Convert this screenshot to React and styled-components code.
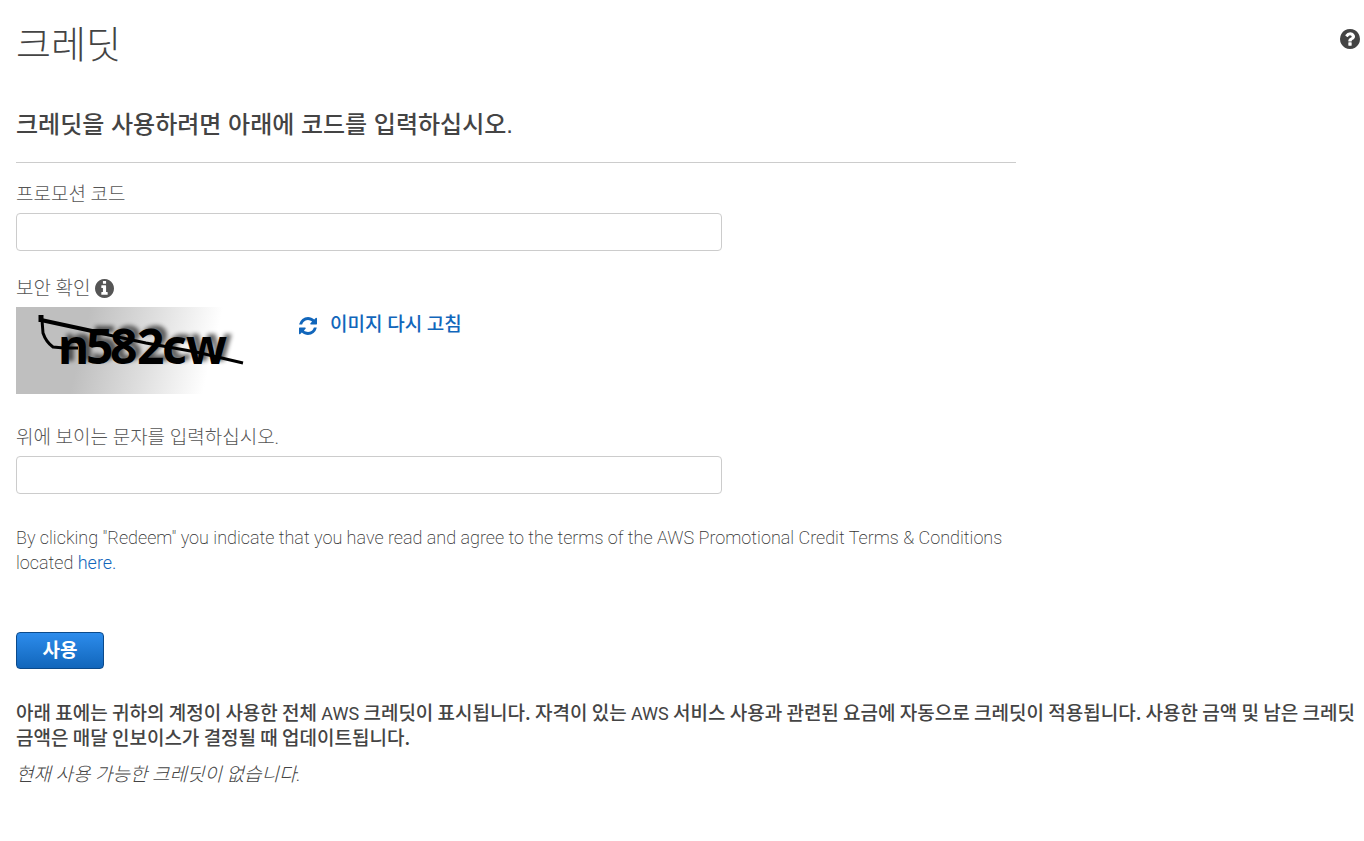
import React from "react";
import styled, { createGlobalStyle } from "styled-components";

const GlobalStyle = createGlobalStyle`
  *, *::before, *::after { box-sizing: border-box; }
  body {
    margin: 0;
    background: #fff;
    color: #444;
    font-family: Roboto, "Noto Sans CJK KR", sans-serif;
    font-size: 19px;
    font-weight: 300;
    line-height: 25px;
  }
`;

const Page = styled.main`
  padding: 16px 4px 16px 16px;
`;

const Header = styled.header`
  display: flex;
  align-items: flex-start;
  justify-content: space-between;
`;

const Title = styled.h1`
  margin: 0;
  font-size: 38px;
  font-weight: 300;
  line-height: 58px;
`;

const HelpButton = styled.button`
  display: flex;
  margin-top: 13px;
  padding: 0;
  border: 0;
  background: none;
  color: #444;
  cursor: pointer;
`;

const Form = styled.form`
  max-width: 1000px;
`;

const SectionTitle = styled.h2`
  margin: 30px 0 19px;
  padding: 4px 0 20px;
  border-bottom: 1px solid #ccc;
  font-family: "Liberation Sans", "Noto Sans CJK KR", sans-serif;
  font-size: 24px;
  font-weight: 500;
  line-height: 34px;
`;

const Field = styled.div`
  display: flex;
  flex-direction: column;
  max-width: 706px;
  gap: 6px;
  margin-bottom: ${(p) => p.$after}px;
`;

const Label = styled.label`
  display: flex;
  align-items: center;
  gap: 4px;
  color: #555;
`;

const TextInput = styled.input`
  width: 100%;
  height: 38px;
  padding: 6px 12px;
  border: 1px solid #ccc;
  border-radius: 4px;
  background: #fff;
  font: inherit;
`;

const CaptchaRow = styled.div`
  display: flex;
  align-items: flex-start;
  gap: 33px;
`;

const CaptchaImage = styled.svg`
  display: block;
  width: 250px;
  height: 87px;
`;

const CaptchaText = styled.text`
  font-family: "Noto Sans", "Open Sans", sans-serif;
  font-size: 48px;
  font-weight: 700;
`;

const RefreshButton = styled.button`
  display: flex;
  align-items: center;
  gap: 13px;
  margin-top: 5px;
  padding: 0;
  border: 0;
  background: none;
  color: #1166bb;
  font: inherit;
  font-weight: 500;
  cursor: pointer;

  svg {
    margin-top: 2px;
  }
`;

const Terms = styled.p`
  margin: 0 0 57px;
  color: #333;
  font-size: 18px;
  font-weight: 200;
`;

const Link = styled.a`
  color: #1166bb;
  font-weight: 300;
  text-decoration: none;
`;

const SubmitButton = styled.button`
  display: block;
  width: 88px;
  height: 37px;
  padding: 0;
  border: 1px solid #0b4a8b;
  border-radius: 4px;
  background: linear-gradient(#2d8cec, #1166bb);
  color: #fff;
  font: inherit;
  font-weight: 700;
  cursor: pointer;
`;

const Note = styled.p`
  margin: 30px 0 13px;
  font-family: "Noto Sans CJK KR", sans-serif;
  font-weight: 500;
`;

const Latin = styled.span`
  font-family: Roboto, sans-serif;
  font-size: 18px;
  font-weight: 400;
  line-height: 1;
`;

const Empty = styled.p`
  margin: 0;
  font-style: italic;
`;

const Icon = ({ size, d, viewBox = "0 128 1536 1536" }) => (
  <svg width={size} height={size} viewBox={viewBox} fill="currentColor" aria-hidden="true">
    <path d={d} />
  </svg>
);

const INFO =
  "M1024 1376v-160q0-14-9-23t-23-9h-96v-512q0-14-9-23t-23-9h-320q-14 0-23 9t-9 23v160q0 14 9 23t23 9h96v320h-96q-14 0-23 9t-9 23v160q0 14 9 23t23 9h448q14 0 23-9t9-23zm-128-896v-160q0-14-9-23t-23-9h-192q-14 0-23 9t-9 23v160q0 14 9 23t23 9h192q14 0 23-9t9-23zm640 416q0 209-103 385.500t-279.500 279.500-385.500 103-385.500-103-279.500-279.500-103-385.500 103-385.500 279.500-279.500 385.500-103 385.500 103 279.500 279.500 103 385.500z";
const QUESTION =
  "M896 1376v-192q0-14-9-23t-23-9h-192q-14 0-23 9t-9 23v192q0 14 9 23t23 9h192q14 0 23-9t9-23zm256-672q0-88-55.500-163t-138.500-116-170-41q-243 0-371 213-15 24 8 42l132 100q7 6 19 6 16 0 25-12 53-68 86-92 34-24 86-24 48 0 85.500 26t37.500 59q0 38-20 61t-68 45q-63 28-115.500 86.500t-52.500 125.500v36q0 14 9 23t23 9h192q14 0 23-9t9-23q0-19 21.500-49.500t54.500-49.500q32-18 49-28.500t46-35 44.500-48 28-60.500 12.500-81zm384 192q0 209-103 385.500t-279.500 279.500-385.500 103-385.500-103-279.500-279.500-103-385.500 103-385.500 279.500-279.500 385.500-103 385.500 103 279.500 279.500 103 385.500z";
const REFRESH =
  "M1511 928q0 5-1 7-64 268-268 434.500T764 1536q-146 0-282.500-55T238 1324l-129 129q-19 19-45 19t-45-19-19-45V960q0-26 19-45t45-19h448q26 0 45 19t19 45-19 45l-137 137q71 66 161 102t187 36q134 0 250-65t186-179q11-17 53-117 8-23 30-23h192q13 0 22.500 9.500t9.500 22.500zm25-800v448q0 26-19 45t-45 19h-448q-26 0-45-19t-19-45 19-45l138-138Q969 256 768 256q-134 0-250 65T332 500q-11 17-53 117-8 23-30 23H50q-13 0-22.500-9.500T18 608v-7q65-268 270-434.500T768 0q146 0 284 55.500T1297 212l130-129q19-19 45-19t45 19 19 45z";

// The challenge crowds its characters, so each one has its own place.
const GLYPHS_X = "42 70 94 121 146 170";

const Captcha = () => (
  <CaptchaImage viewBox="0 0 250 87" role="img" aria-label="CAPTCHA">
    <defs>
      <linearGradient id="fade" gradientUnits="userSpaceOnUse" x1="72" y1="10" x2="198" y2="40">
        <stop offset="0" stopColor="#bfbfbf" />
        <stop offset="0.5" stopColor="#dedede" />
        <stop offset="1" stopColor="#fff" />
      </linearGradient>
      <filter id="soft" x="-10%" y="-20%" width="120%" height="140%">
        <feGaussianBlur stdDeviation="2" />
      </filter>
    </defs>
    <rect width="250" height="87" fill="url(#fade)" />
    <g filter="url(#soft)" opacity="0.6" aria-hidden="true">
      <g transform="translate(5 -3)">
        <CaptchaText x={GLYPHS_X} y="57">n582cw</CaptchaText>
      </g>
    </g>
    <CaptchaText x={GLYPHS_X} y="57">n582cw</CaptchaText>
    <g fill="none" stroke="#000" strokeLinejoin="round">
      <path d="M25 8v7" strokeWidth="5" />
      <path d="M25 13L76 24" strokeWidth="4" />
      <path d="M74 24L130 36L180 45L227 56" strokeWidth="3" />
      <path d="M26 13L27 26Q30 35 37 40L48 41L62 41" strokeWidth="3" />
    </g>
  </CaptchaImage>
);

export default function App() {
  return (
    <>
      <GlobalStyle />
      <Page>
        <Header>
          <Title>크레딧</Title>
          <HelpButton type="button" aria-label="도움말">
            <Icon size={20} d={QUESTION} />
          </HelpButton>
        </Header>
        <Form onSubmit={(e) => e.preventDefault()}>
          <SectionTitle>크레딧을 사용하려면 아래에 코드를 입력하십시오.</SectionTitle>
          <Field $after={25}>
            <Label htmlFor="promo">프로모션 코드</Label>
            <TextInput id="promo" type="text" />
          </Field>
          <Field $after={31}>
            <Label as="div">
              보안 확인
              <Icon size={19} d={INFO} />
            </Label>
            <CaptchaRow>
              <Captcha />
              <RefreshButton type="button">
                <Icon size={18} d={REFRESH} viewBox="0 0 1536 1536" />
                이미지 다시 고침
              </RefreshButton>
            </CaptchaRow>
          </Field>
          <Field $after={31}>
            <Label htmlFor="captcha">위에 보이는 문자를 입력하십시오.</Label>
            <TextInput id="captcha" type="text" />
          </Field>
          <Terms>
            By clicking "Redeem" you indicate that you have read and agree to the terms of the AWS
            Promotional Credit Terms &amp; Conditions located <Link href="#terms">here.</Link>
          </Terms>
          <SubmitButton type="submit">사용</SubmitButton>
        </Form>
        <Note>
          아래 표에는 귀하의 계정이 사용한 전체 <Latin>AWS</Latin> 크레딧이 표시됩니다. 자격이 있는{" "}
          <Latin>AWS</Latin> 서비스 사용과 관련된 요금에 자동으로 크레딧이 적용됩니다. 사용한 금액 및
          남은 크레딧 금액은 매달 인보이스가 결정될 때 업데이트됩니다.
        </Note>
        <Empty>현재 사용 가능한 크레딧이 없습니다.</Empty>
      </Page>
    </>
  );
}
